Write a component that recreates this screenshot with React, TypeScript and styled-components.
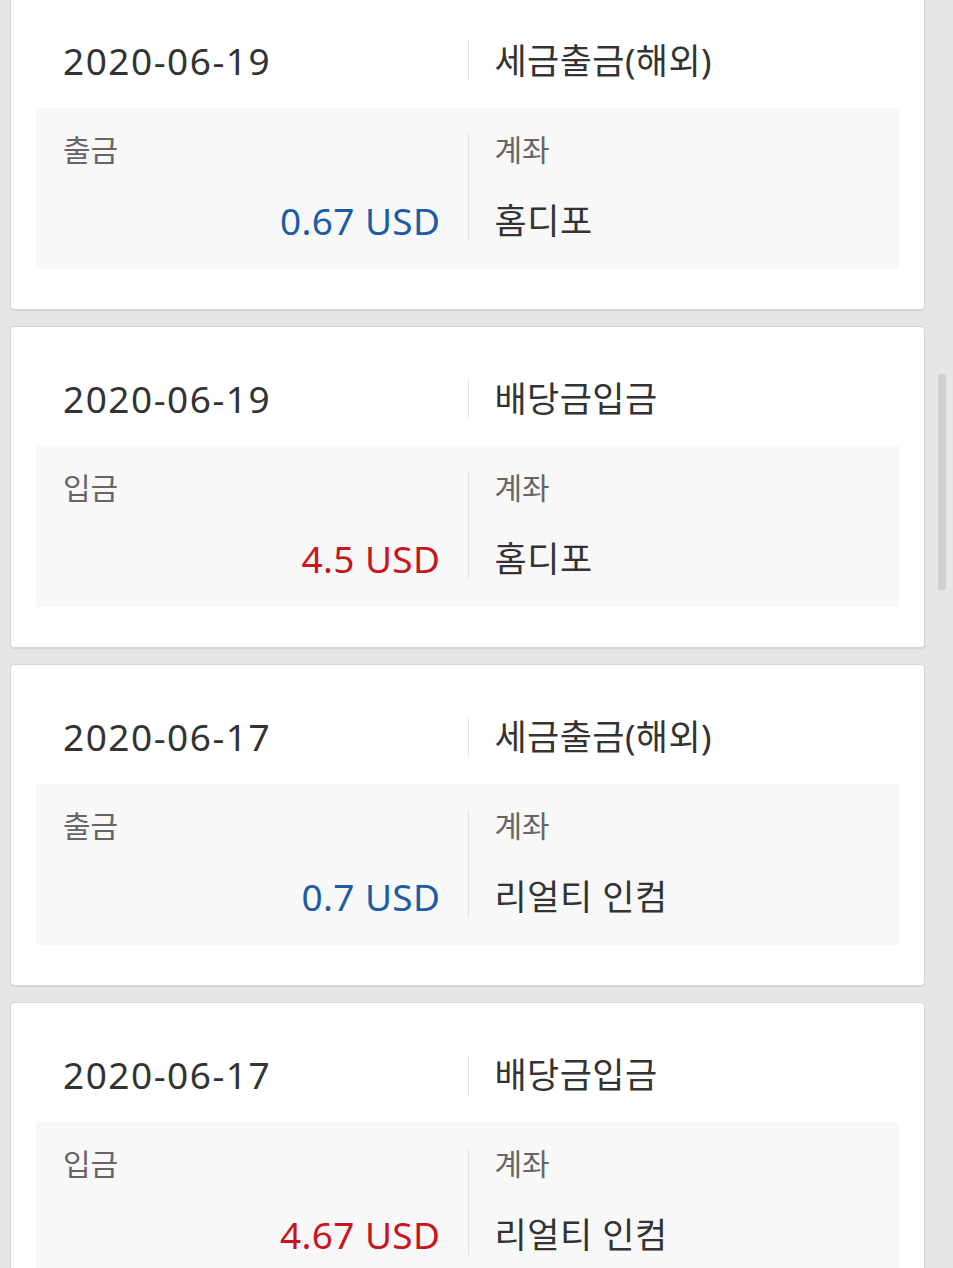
import React from "react";
import styled, { createGlobalStyle } from "styled-components";

const BG = "#e6e6e6";
const TEXT = "#333333";
const LABEL = "#666666";
const BLUE = "#1c5ca4";
const RED = "#c9161d";

type Kind = "in" | "out";

interface Entry {
  date: string;
  title: string;
  kind: Kind;
  amount: string;
  account: string;
}

const entries: Entry[] = [
  { date: "2020-06-19", title: "세금출금(해외)", kind: "out", amount: "0.67 USD", account: "홈디포" },
  { date: "2020-06-19", title: "배당금입금", kind: "in", amount: "4.5 USD", account: "홈디포" },
  { date: "2020-06-17", title: "세금출금(해외)", kind: "out", amount: "0.7 USD", account: "리얼티 인컴" },
  { date: "2020-06-17", title: "배당금입금", kind: "in", amount: "4.67 USD", account: "리얼티 인컴" },
];

const GlobalStyle = createGlobalStyle`
  html, body {
    margin: 0;
    padding: 0;
    height: 100%;
    overflow: hidden;
    background: ${BG};
    font-family: "Noto Sans", "Noto Sans CJK KR", sans-serif;
  }
`;

const HistoryCard: React.FC<{ entry: Entry }> = ({ entry }) => {
  return (
    <Card>
      <TopRow>
        <DateCell>{entry.date}</DateCell>
        <TitleCell>{entry.title}</TitleCell>
      </TopRow>
      <Detail>
        <DetailCol>
          <Label>{entry.kind === "in" ? "입금" : "출금"}</Label>
          <Amount kind={entry.kind}>{entry.amount}</Amount>
        </DetailCol>
        <DetailCol divided>
          <Label>계좌</Label>
          <Account>{entry.account}</Account>
        </DetailCol>
      </Detail>
    </Card>
  );
};

export default function App() {
  return (
    <>
      <GlobalStyle />
      <Page>
        {entries.map((e, i) => (
          <HistoryCard key={i} entry={e} />
        ))}
      </Page>
      <ScrollThumb />
    </>
  );
}

const Page = styled.div`
  margin-top: -12px;
  padding: 0 28px 0 10px;
  display: flex;
  flex-direction: column;
  gap: 16px;
`;

const Card = styled.div`
  background: #ffffff;
  border: 1px solid #d6d6d6;
  border-radius: 4px;
  box-shadow: 0 1px 1px rgba(0, 0, 0, 0.08);
  padding: 0 25px 40px;
`;

const TopRow = styled.div`
  display: grid;
  grid-template-columns: 1fr 1fr;
  align-items: center;
  padding: 52px 0 27px;
`;

const DateCell = styled.div`
  height: 40px;
  line-height: 40px;
  padding-left: 27px;
  font-size: 37px;
  color: ${TEXT};
  letter-spacing: 1.5px;
`;

const TitleCell = styled.div`
  height: 40px;
  line-height: 40px;
  padding-left: 26px;
  border-left: 1px solid #e2e2e2;
  font-size: 35px;
  color: ${TEXT};
  letter-spacing: 0.4px;
`;

const Detail = styled.div`
  display: grid;
  grid-template-columns: 1fr 1fr;
  background: #f8f8f8;
  padding: 26px 0 28px;
`;

const DetailCol = styled.div<{ divided?: boolean }>`
  display: flex;
  flex-direction: column;
  justify-content: space-between;
  height: 107px;
  padding: 0 27px 0 ${({ divided }) => (divided ? "26px" : "27px")};
  border-left: ${({ divided }) => (divided ? "1px solid #e2e2e2" : "none")};
`;

const Label = styled.div`
  line-height: 32px;
  font-size: 30px;
  color: ${LABEL};
`;

const Amount = styled.div<{ kind: Kind }>`
  line-height: 40px;
  font-size: 37px;
  text-align: right;
  letter-spacing: 0.4px;
  color: ${({ kind }) => (kind === "in" ? RED : BLUE)};
`;

const Account = styled.div`
  line-height: 40px;
  font-size: 35px;
  color: ${TEXT};
  letter-spacing: 0.5px;
`;

const ScrollThumb = styled.div`
  position: fixed;
  top: 374px;
  left: 938px;
  width: 8px;
  height: 216px;
  border-radius: 2px;
  background: #d0d0d0;
`;
